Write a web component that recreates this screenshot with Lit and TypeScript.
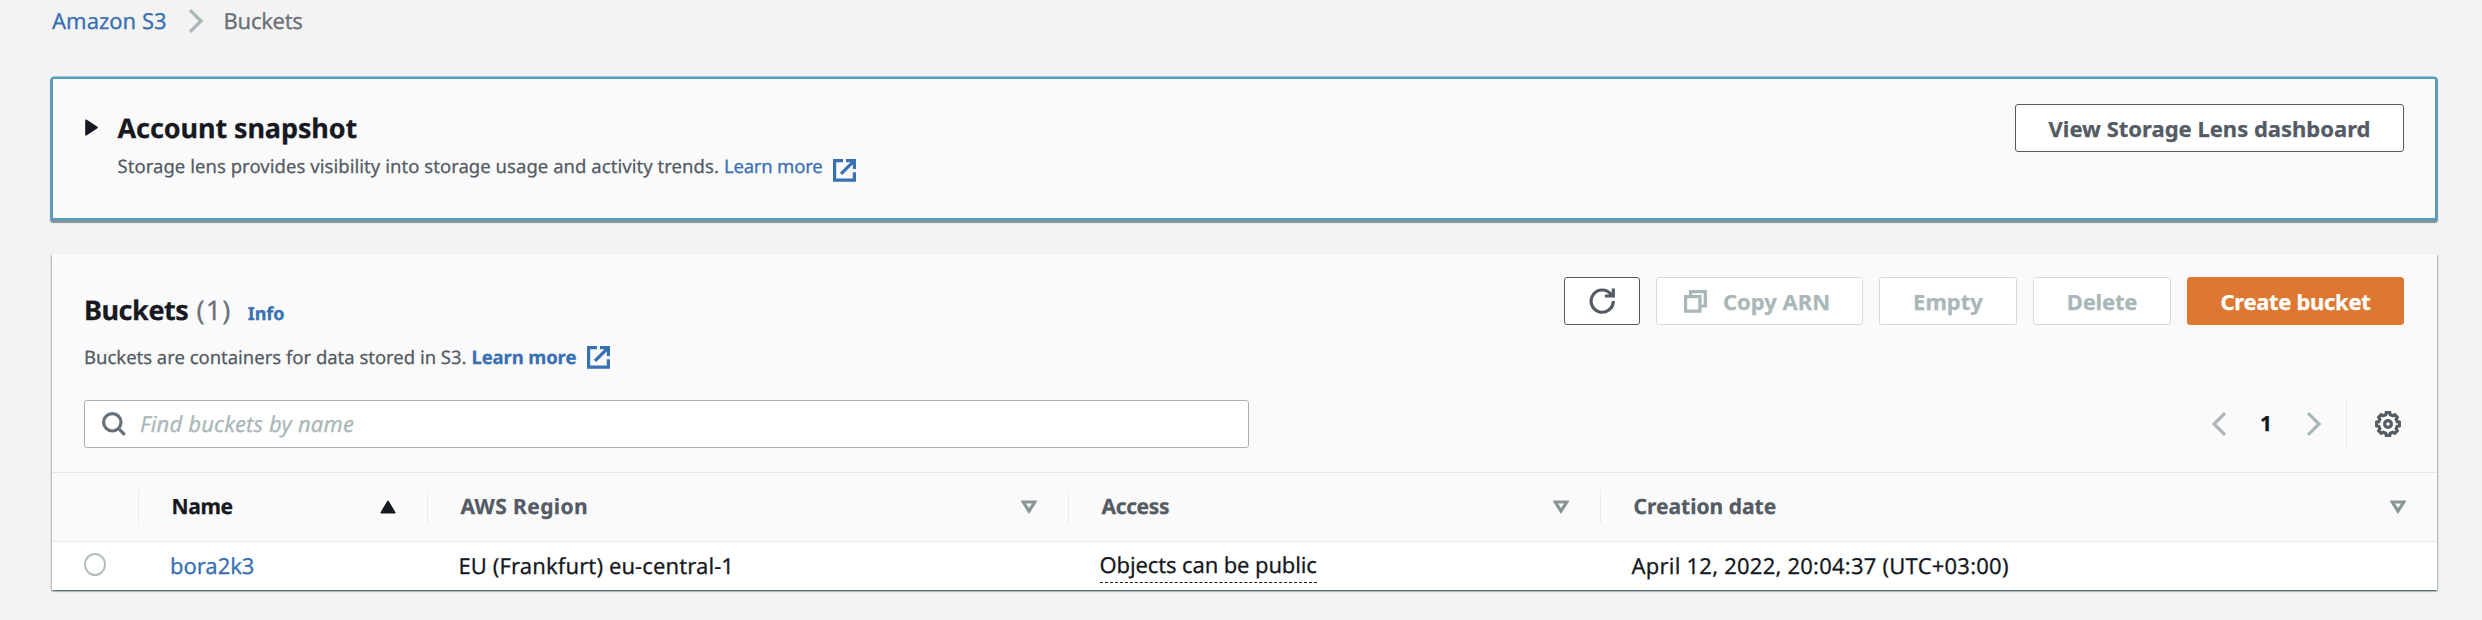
import { LitElement, html, css, svg } from "lit";
import { customElement, property } from "lit/decorators.js";
import { classMap } from "lit/directives/class-map.js";

const gearOutline = (() => {
  const points: string[] = [];
  const teeth = 8;
  const step = (Math.PI * 2) / teeth;
  for (let i = 0; i < teeth; i++) {
    const mid = i * step - Math.PI / 2;
    for (const [offset, radius] of [
      [-0.29, 9.5],
      [-0.18, 11.5],
      [0.18, 11.5],
      [0.29, 9.5],
    ]) {
      const a = mid + offset * step * 1.1;
      points.push(`${(13 + radius * Math.cos(a)).toFixed(2)},${(13 + radius * Math.sin(a)).toFixed(2)}`);
    }
  }
  return points.join(" ");
})();

const icons = {
  chevron: { w: 16, h: 24, body: svg`<path d="M2 1.2 L13 12 L2 22.8" />` },
  chevronLeft: { w: 16, h: 24, body: svg`<path d="M14 1.2 L3 12 L14 22.8" />` },
  caret: { w: 13, h: 17, body: svg`<path class="solid" d="M1 1.2 L12 8.5 L1 15.8 Z" />` },
  external: {
    w: 23,
    h: 23,
    body: svg`<path d="M10 1.6 H1.6 V21.2 H21.4 V13.2 M13 1.6 H21.4 V10 M8 14.8 L20.6 2.4" />`,
  },
  refresh: {
    w: 26,
    h: 26,
    body: svg`<path d="M24.3 13 A11.1 11.1 0 1 1 22.2 6.6 M24.3 0.4 V8 H16" />`,
  },
  copy: {
    w: 23,
    h: 23,
    body: svg`<path d="M1.6 6.6 H15.9 V21.2 H1.6 Z M6.6 6.6 V1.6 H21.3 V16 H15.9" />`,
  },
  search: {
    w: 24,
    h: 24,
    body: svg`<circle cx="10.3" cy="10.3" r="8.7" /><path d="M16.4 16.4 L22.8 22.8" />`,
  },
  gear: {
    w: 26,
    h: 26,
    body: svg`<polygon points=${gearOutline} /><circle cx="13" cy="13" r="3.4" />`,
  },
  sortUp: { w: 16, h: 14, body: svg`<path class="solid" d="M8 1.5 L14.8 12.6 H1.2 Z" />` },
  sortDown: { w: 16, h: 14, body: svg`<path d="M2.2 2 H13.8 L8 11 Z" />` },
};

type IconName = keyof typeof icons;

@customElement("ui-icon")
export class UiIcon extends LitElement {
  static styles = css`
    :host {
      display: inline-flex;
      flex: none;
    }
    svg {
      display: block;
      fill: none;
      stroke: currentColor;
      stroke-width: 3.2;
    }
    .solid {
      fill: currentColor;
      stroke-width: 1.6;
      stroke-linejoin: round;
    }
  `;
  @property() name: IconName = "chevron";
  render() {
    const icon = icons[this.name];
    return html`<svg width=${icon.w} height=${icon.h} viewBox="0 0 ${icon.w} ${icon.h}">${icon.body}</svg>`;
  }
}

@customElement("ui-button")
export class UiButton extends LitElement {
  static styles = css`
    :host {
      display: block;
      flex: none;
    }
    .button {
      box-sizing: border-box;
      display: flex;
      align-items: center;
      justify-content: center;
      gap: 16px;
      width: 100%;
      height: 48px;
      padding: 0;
      border: 1.5px solid #545b64;
      border-radius: 3px;
      background: #fff;
      color: #545b64;
      font: inherit;
      font-weight: 700;
      letter-spacing: inherit;
      white-space: nowrap;
    }
    .disabled {
      border-color: #d5dbdb;
      color: #aab7b8;
    }
    .primary {
      border-color: #dd7833;
      background: #dd7833;
      color: #fff;
    }
    .with-icon {
      padding-right: 5px;
    }
  `;
  @property() variant = "normal";
  @property() icon = "";
  render() {
    return html`<button
      class=${classMap({
        button: true,
        disabled: this.variant === "disabled",
        primary: this.variant === "primary",
        "with-icon": this.icon !== "",
      })}
    >
      ${this.icon ? html`<ui-icon name=${this.icon}></ui-icon>` : ""}<slot></slot>
    </button>`;
  }
}

@customElement("app-root")
export class AppRoot extends LitElement {
  static styles = css`
    :host {
      display: block;
      box-sizing: border-box;
      height: 620px;
      padding: 0 45px 0 51px;
      overflow: hidden;
      background: #f3f3f3;
      color: #16191f;
      font: 22px/34px "Noto Sans", "Open Sans", sans-serif;
      text-rendering: geometricPrecision;
      -webkit-text-stroke: 0.25px currentColor;
      white-space: nowrap;
    }
    .link {
      color: #3870b2;
      text-decoration: none;
    }
    .strong {
      font-weight: 700;
    }
    .breadcrumbs {
      display: flex;
      align-items: center;
      height: 41px;
      padding-left: 1px;
      margin-bottom: 36px;
    }
    .crumb-sep {
      margin: 0 20px 0 21px;
      color: #aab7b8;
    }
    .crumb-current {
      color: #687078;
      letter-spacing: -0.3px;
    }
    h2 {
      margin: 0;
      font-size: 27px;
      font-weight: 700;
    }
    .desc {
      display: flex;
      align-items: center;
      font-size: 18.5px;
      line-height: 27px;
      color: #545b64;
    }
    .snapshot {
      box-sizing: border-box;
      display: flex;
      height: 143px;
      margin-bottom: 34px;
      padding: 25px 31px 0 32px;
      border: 2px solid #559ebd;
      border-radius: 3px;
      background: #fafafa;
      box-shadow: 0 0 0 0.5px #559ebd, 0 2px 1px 0.5px rgba(0, 28, 36, 0.45);
    }
    .snapshot-caret {
      padding-top: 15px;
      margin-right: 19.5px;
      line-height: 0;
    }
    .snapshot-text {
      flex: 1;
    }
    .snapshot-title {
      line-height: 47px;
      letter-spacing: -0.1px;
    }
    .snapshot-desc {
      letter-spacing: 0.045px;
    }
    .snapshot-link {
      margin-left: 5px;
      letter-spacing: -0.2px;
    }
    .snapshot-ext {
      margin: 8px 0 0 10px;
    }
    .view-button {
      width: 389px;
    }
    .buckets {
      margin: 0 0 0 1px;
      background: #fafafa;
      box-shadow: 0 1.5px 1.5px rgba(0, 28, 36, 0.45), 1px 1px 1.5px rgba(0, 28, 36, 0.22),
        -1px 1px 1.5px rgba(0, 28, 36, 0.22), 0 -0.5px 0 #eaeded;
    }
    .buckets-header {
      display: flex;
      justify-content: space-between;
      align-items: flex-start;
      box-sizing: border-box;
      height: 146px;
      padding: 23px 33px 0 32px;
    }
    .heading {
      padding-top: 15px;
    }
    .title-row {
      display: flex;
      align-items: baseline;
      height: 35px;
      margin-bottom: 17px;
    }
    .buckets-title {
      line-height: 35px;
      letter-spacing: -0.45px;
    }
    .count {
      margin-left: 8px;
      font-size: 27px;
      line-height: 35px;
      letter-spacing: 1.2px;
      color: #687078;
    }
    .info {
      margin-left: 16px;
      font-size: 18px;
    }
    .buckets-desc {
      letter-spacing: -0.02px;
    }
    .buckets-link {
      margin-left: 5px;
      letter-spacing: -0.13px;
    }
    .buckets-ext {
      margin-left: 10.5px;
    }
    .actions {
      display: flex;
      gap: 16px;
    }
    .refresh {
      width: 76px;
    }
    .copy {
      width: 207px;
    }
    .empty,
    .delete {
      width: 138px;
    }
    .delete {
      letter-spacing: -0.2px;
    }
    .create {
      width: 217px;
      letter-spacing: -0.33px;
    }
    .tools {
      display: flex;
      justify-content: space-between;
      align-items: center;
      height: 48px;
      padding: 0 36px 24px 32px;
    }
    .search {
      box-sizing: border-box;
      display: flex;
      align-items: center;
      gap: 14.5px;
      width: 1165px;
      height: 48px;
      padding-left: 16.5px;
      border: 1px solid #a4b1b2;
      border-radius: 3px;
      background: #fff;
      color: #687078;
    }
    .placeholder {
      font-style: italic;
      letter-spacing: 0.18px;
      color: #aab7b8;
    }
    .pager {
      display: flex;
      align-items: center;
      color: #aab7b8;
    }
    .page {
      margin: 0 34px 0 33px;
      font-size: 21px;
      font-weight: 700;
      color: #16191f;
    }
    .pager-divider {
      width: 1px;
      height: 48px;
      margin: 0 28px 0 24px;
      background: #eaeded;
    }
    .gear {
      color: #545b64;
    }
    .row {
      display: grid;
      grid-template-columns: 86px 289px 641px 532px 1fr;
      align-items: center;
    }
    .head {
      height: 68px;
      border-top: 1px solid #e6e9e9;
      border-bottom: 1px solid #e6e9e9;
      font-size: 21px;
      font-weight: 700;
      color: #545b64;
    }
    .body {
      height: 48px;
      background: #fff;
    }
    .th {
      display: flex;
      align-items: center;
      justify-content: space-between;
      height: 34px;
      padding: 0 31px 0 32.5px;
      border-left: 1px solid #eaeded;
      color: #545b64;
    }
    .th .sort {
      color: #879596;
    }
    .sorted,
    .th.sorted .sort {
      color: #16191f;
    }
    .td {
      padding-left: 31.5px;
    }
    .radio {
      box-sizing: border-box;
      width: 22px;
      height: 23px;
      margin: 0 0 3px 32px;
      border: 2px solid #b4bebf;
      border-radius: 50%;
      background: #fff;
    }
    .h-name,
    .h-access {
      letter-spacing: -0.36px;
    }
    .h-region {
      letter-spacing: 0.387px;
    }
    .c-name {
      padding-left: 0.5px;
      letter-spacing: -0.05px;
    }
    .c-region {
      letter-spacing: 0.1px;
    }
    .c-access {
      display: inline-block;
      vertical-align: top;
      line-height: 33px;
      border-bottom: 1px dashed #16191f;
      letter-spacing: -0.13px;
    }
    .c-date {
      letter-spacing: 0.22px;
    }
  `;

  private columns = [
    { label: "Name", cls: "h-name", sorted: true },
    { label: "AWS Region", cls: "h-region", sorted: false },
    { label: "Access", cls: "h-access", sorted: false },
    { label: "Creation date", cls: "h-date", sorted: false },
  ];

  render() {
    return html`
      <nav class="breadcrumbs">
        <a class="link">Amazon S3</a>
        <ui-icon class="crumb-sep" name="chevron"></ui-icon>
        <span class="crumb-current">Buckets</span>
      </nav>

      <section class="snapshot">
        <div class="snapshot-caret"><ui-icon name="caret"></ui-icon></div>
        <div class="snapshot-text">
          <h2 class="snapshot-title">Account snapshot</h2>
          <div class="desc">
            <span class="snapshot-desc"
              >Storage lens provides visibility into storage usage and activity trends.</span
            >
            <a class="link snapshot-link">Learn more</a>
            <ui-icon class="link snapshot-ext" name="external"></ui-icon>
          </div>
        </div>
        <ui-button class="view-button">View Storage Lens dashboard</ui-button>
      </section>

      <section class="buckets">
        <div class="buckets-header">
          <div class="heading">
            <div class="title-row">
              <h2 class="buckets-title">Buckets</h2>
              <span class="count">(1)</span>
              <a class="link strong info">Info</a>
            </div>
            <div class="desc">
              <span class="buckets-desc">Buckets are containers for data stored in S3.</span>
              <a class="link strong buckets-link">Learn more</a>
              <ui-icon class="link buckets-ext" name="external"></ui-icon>
            </div>
          </div>
          <div class="actions">
            <ui-button class="refresh"><ui-icon name="refresh"></ui-icon></ui-button>
            <ui-button class="copy" variant="disabled" icon="copy">Copy ARN</ui-button>
            <ui-button class="empty" variant="disabled">Empty</ui-button>
            <ui-button class="delete" variant="disabled">Delete</ui-button>
            <ui-button class="create" variant="primary">Create bucket</ui-button>
          </div>
        </div>

        <div class="tools">
          <div class="search">
            <ui-icon name="search"></ui-icon>
            <span class="placeholder">Find buckets by name</span>
          </div>
          <div class="pager">
            <ui-icon name="chevronLeft"></ui-icon>
            <span class="page">1</span>
            <ui-icon name="chevron"></ui-icon>
            <span class="pager-divider"></span>
            <ui-icon class="gear" name="gear"></ui-icon>
          </div>
        </div>

        <div class="row head">
          <div></div>
          ${this.columns.map(
            (c) => html`<div class=${classMap({ th: true, sorted: c.sorted })}>
              <span class=${classMap({ [c.cls]: true, sorted: c.sorted })}>${c.label}</span>
              <ui-icon class="sort" name=${c.sorted ? "sortUp" : "sortDown"}></ui-icon>
            </div>`
          )}
        </div>
        <div class="row body">
          <div class="radio"></div>
          <div class="td"><a class="link c-name">bora2k3</a></div>
          <div class="td"><span class="c-region">EU (Frankfurt) eu-central-1</span></div>
          <div class="td"><span class="c-access">Objects can be public</span></div>
          <div class="td"><span class="c-date">April 12, 2022, 20:04:37 (UTC+03:00)</span></div>
        </div>
      </section>
    `;
  }
}
